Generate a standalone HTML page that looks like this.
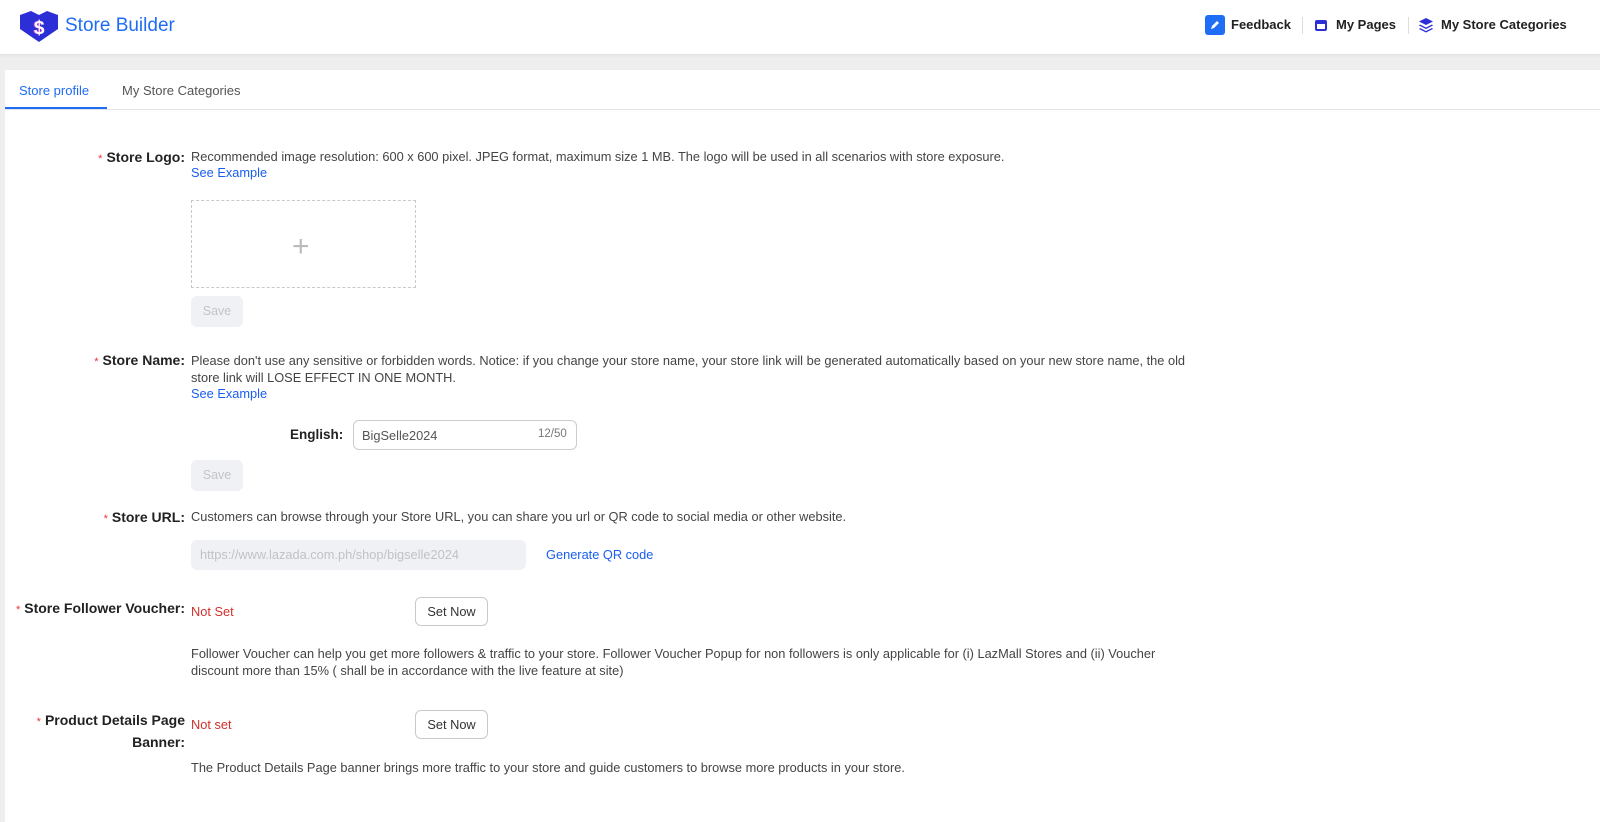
<!DOCTYPE html>
<html><head><style>
*{box-sizing:border-box;margin:0;padding:0}
body{width:1600px;height:822px;background:#eeeeef;font-family:"Liberation Sans",sans-serif;position:relative;overflow:hidden;color:#333}
.hdr{position:absolute;left:0;top:0;width:1600px;height:54px;background:#fff;box-shadow:0 1px 3px rgba(0,0,0,.08)}
.main{position:absolute;left:5px;top:70px;right:0;bottom:0;background:#fff}
.a{position:absolute;white-space:nowrap}
.lbl{position:absolute;right:calc(1600px - 185px);font-weight:bold;font-size:14px;color:#222;text-align:right;white-space:nowrap}
.lbl i{color:#e33;font-style:normal;font-weight:normal;font-size:11px;margin-right:4px}
.t{font-size:12.8px;color:#444}
.link{color:#1a5ef0;font-size:12.8px}
.save{position:absolute;width:52px;height:31px;background:#f0f1f4;border-radius:6px;color:#c2c4c9;font-size:12.5px;text-align:center;line-height:31px}
.btn{position:absolute;width:73px;height:29px;border:1px solid #c8c9cc;border-radius:6px;font-size:12.8px;color:#333;text-align:center;line-height:27px;background:#fff}
.red{color:#d0312d;font-size:12.8px}
</style></head><body>
<div class="hdr">
<svg class="a" style="left:19px;top:11px" width="40" height="32" viewBox="0 0 40 32"><path d="M1 4 L12 0 L20 4 L28 0 L39 4 L39 18 L20 31 L1 18 Z" fill="#2d2fd6"/><text x="14" y="23" font-size="19" font-weight="bold" fill="#e04bdc" font-family="Liberation Sans">$</text><text x="15" y="23" font-size="19" font-weight="bold" fill="#fff" font-family="Liberation Sans">$</text></svg>
<div class="a" style="left:65px;top:15px;font-size:19px;color:#1f6cf5">Store Builder</div>
<div class="a" style="left:1205px;top:15px;width:20px;height:20px;background:#1f6cf5;border-radius:3px"><svg width="20" height="20"><path d="M6 14 L7 11 L12 6 L14 8 L9 13 Z" fill="#fff"/></svg></div>
<div class="a" style="left:1231px;top:17px;font-size:13px;font-weight:bold;color:#222">Feedback</div>
<div class="a" style="left:1302px;top:17px;width:1px;height:17px;background:#ddd"></div>
<svg class="a" style="left:1314px;top:18px" width="14" height="14"><rect x="1" y="2" width="12" height="11" rx="2" fill="#2d2fd6"/><rect x="3" y="6" width="8" height="5" fill="#fff"/></svg>
<div class="a" style="left:1336px;top:17px;font-size:13px;font-weight:bold;color:#222">My Pages</div>
<div class="a" style="left:1408px;top:17px;width:1px;height:17px;background:#ddd"></div>
<svg class="a" style="left:1418px;top:17px" width="16" height="16"><path d="M8 1 L15 4.5 L8 8 L1 4.5Z M2 7.5 L8 10.5 L14 7.5 L15 8.5 L8 12 L1 8.5Z M2 11 L8 14 L14 11 L15 12 L8 15.5 L1 12Z" fill="#2d2fd6"/></svg>
<div class="a" style="left:1441px;top:17px;font-size:13px;font-weight:bold;color:#222">My Store Categories</div>
</div>
<div class="main"></div>
<div class="a" style="left:19px;top:83px;font-size:13px;color:#1f6cf5">Store profile</div>
<div class="a" style="left:5px;top:107px;width:102px;height:2px;background:#1f6cf5"></div>
<div class="a" style="left:122px;top:83px;font-size:13px;color:#555">My Store Categories</div>
<div class="a" style="left:5px;top:109px;width:1595px;height:1px;background:#e3e3e8"></div>

<div class="lbl" style="top:149px"><i>*</i>Store Logo:</div>
<div class="a t" style="left:191px;top:149px">Recommended image resolution: 600 x 600 pixel. JPEG format, maximum size 1 MB. The logo will be used in all scenarios with store exposure.</div>
<div class="a link" style="left:191px;top:165px">See Example</div>
<div class="a" style="left:191px;top:200px;width:225px;height:88px;border:1px dashed #c9c9c9"></div>
<div class="a" style="left:292px;top:230px;font-size:30px;color:#bbb;font-weight:300">+</div>
<div class="save" style="left:191px;top:296px">Save</div>

<div class="lbl" style="top:352px"><i>*</i>Store Name:</div>
<div class="a t" style="left:191px;top:352px;line-height:17px">Please don't use any sensitive or forbidden words. Notice: if you change your store name, your store link will be generated automatically based on your new store name, the old<br>store link will LOSE EFFECT IN ONE MONTH.</div>
<div class="a link" style="left:191px;top:386px">See Example</div>
<div class="a" style="left:290px;top:427px;font-size:13.5px;font-weight:bold;color:#222">English:</div>
<div class="a" style="left:353px;top:420px;width:224px;height:30px;border:1px solid #ccc;border-radius:6px"></div>
<div class="a t" style="left:362px;top:428px;color:#555">BigSelle2024</div>
<div class="a t" style="left:538px;top:428px;color:#777;font-size:11.5px">12/50</div>
<div class="save" style="left:191px;top:460px">Save</div>

<div class="lbl" style="top:509px"><i>*</i>Store URL:</div>
<div class="a t" style="left:191px;top:509px">Customers can browse through your Store URL, you can share you url or QR code to social media or other website.</div>
<div class="a" style="left:191px;top:540px;width:335px;height:30px;background:#f0f1f4;border-radius:6px"></div>
<div class="a t" style="left:200px;top:547px;color:#c0c2c7">https://www.lazada.com.ph/shop/bigselle2024</div>
<div class="a link" style="left:546px;top:547px">Generate QR code</div>

<div class="lbl" style="top:600px"><i>*</i>Store Follower Voucher:</div>
<div class="a red" style="left:191px;top:604px">Not Set</div>
<div class="btn" style="left:415px;top:597px">Set Now</div>
<div class="a t" style="left:191px;top:645px;line-height:17px">Follower Voucher can help you get more followers &amp; traffic to your store. Follower Voucher Popup for non followers is only applicable for (i) LazMall Stores and (ii) Voucher<br>discount more than 15% ( shall be in accordance with the live feature at site)</div>

<div class="lbl" style="top:710px;line-height:20px"><i>*</i>Product Details Page<br>Banner:</div>
<div class="a red" style="left:191px;top:717px">Not set</div>
<div class="btn" style="left:415px;top:710px">Set Now</div>
<div class="a t" style="left:191px;top:760px">The Product Details Page banner brings more traffic to your store and guide customers to browse more products in your store.</div>
</body></html>
